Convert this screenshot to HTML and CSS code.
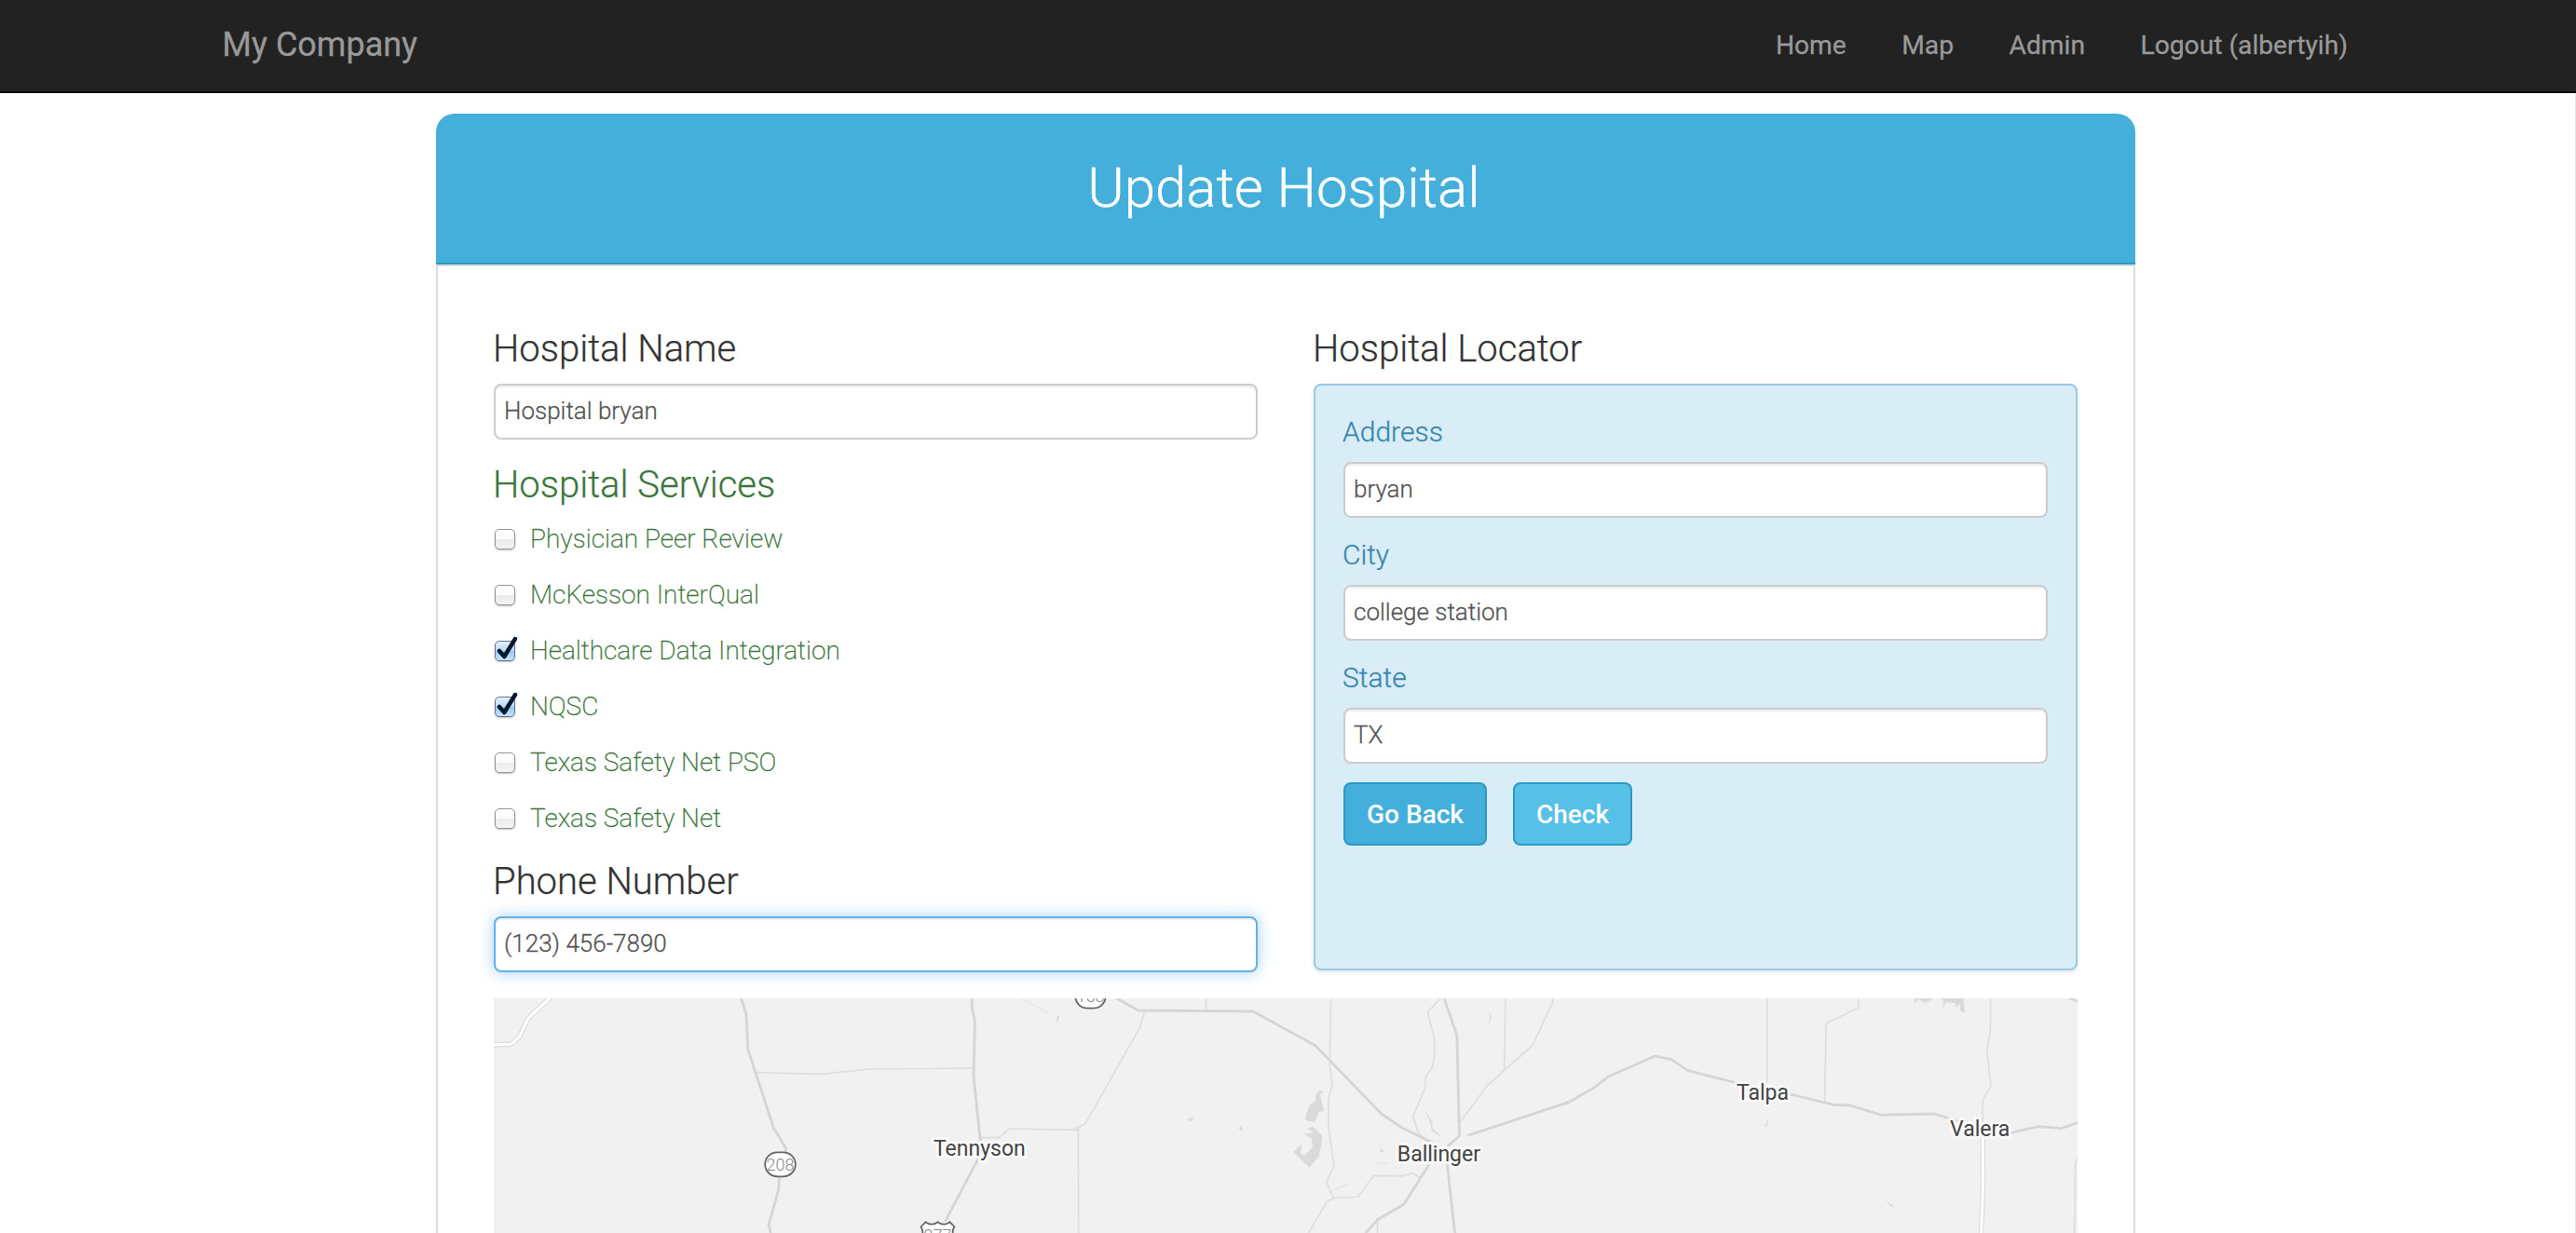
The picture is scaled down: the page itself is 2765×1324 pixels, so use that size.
FILE: index.html
```html
<!DOCTYPE html>
<html lang="en">
<head>
<meta charset="utf-8">
<title>Update Hospital</title>
<link rel="stylesheet" href="styles.css">
</head>
<body>
<header class="navbar">
  <a class="brand">My Company</a>
  <nav class="nav">
    <a>Home</a>
    <a>Map</a>
    <a>Admin</a>
    <a>Logout (albertyih)</a>
  </nav>
</header>
<main class="card">
  <h1 class="card-title">Update Hospital</h1>
  <div class="card-body">
    <div class="columns">
      <section class="details">
        <h2 class="heading">Hospital Name</h2>
        <input class="field" type="text" value="Hospital bryan">
        <h2 class="heading heading-green">Hospital Services</h2>
        <ul class="services">
          <li><span class="box"></span>Physician Peer Review</li>
          <li><span class="box"></span>McKesson InterQual</li>
          <li><span class="box box-on"><svg class="tick" viewBox="0 0 26 28"><path d="M6 16 L11.300 22 L23 3"/></svg></span>Healthcare Data Integration</li>
          <li><span class="box box-on"><svg class="tick" viewBox="0 0 26 28"><path d="M6 16 L11.300 22 L23 3"/></svg></span>NQSC</li>
          <li><span class="box"></span>Texas Safety Net PSO</li>
          <li><span class="box"></span>Texas Safety Net</li>
        </ul>
        <h2 class="heading heading-phone">Phone Number</h2>
        <input class="field field-active" type="text" value="(123) 456-7890">
      </section>
      <section class="locator">
        <h2 class="heading">Hospital Locator</h2>
        <div class="panel">
          <label class="label">Address</label>
          <input class="field" type="text" value="bryan">
          <label class="label">City</label>
          <input class="field" type="text" value="college station">
          <label class="label">State</label>
          <input class="field" type="text" value="TX">
          <div class="buttons">
            <button class="btn btn-back">Go Back</button>
            <button class="btn btn-check">Check</button>
          </div>
        </div>
      </section>
    </div>
    <svg class="map" viewBox="530 1072 1700 252">
      <g class="lake">
        <path d="M1416.500 1170.700L1421.400 1172.700 1416.800 1175.300 1421.100 1192.700 1415.700 1194 1411.500 1205 1401.500 1203 1401.200 1197.700 1406.500 1185.300 1412.200 1182 1411.900 1175.700Z"/>
        <path d="M1402.700 1211.700L1409.200 1209.700 1419.100 1219.300 1418.400 1228.300 1415.700 1241.700 1405.400 1254 1388.100 1237 1397.300 1228.300 1396.200 1239.700 1401.500 1240 1409.200 1231 1407.300 1222 1398.900 1217.700 1410 1216.300Z"/>
        <path d="M2054.900 1072L2055.300 1078.700 2059 1073 2066.700 1077.300 2073.400 1073V1072Z"/>
        <path d="M2082.700 1072L2086.500 1074.700 2085.200 1082.700 2089 1076 2098.700 1077.300 2099.500 1082 2103.700 1077.300 2104.200 1085.300 2109.200 1088 2107.500 1072Z"/>
        <path d="M1273.700 1202.300L1281 1199 1279.800 1204.300ZM1329.200 1211.700L1331.900 1209 1335 1215ZM1135.600 1088.700L1137.100 1092.700 1133.300 1099ZM1599.400 1086.700L1600.500 1092.700 1598.200 1100.700ZM1480.700 1235.700L1482.700 1232.300 1486.100 1238ZM1898.800 1200.700L1893.700 1209.300 1896.700 1210ZM2023.800 1288.300L2029.700 1295.700H2033Z"/>
        <path d="M1528.600 1190.300L1537.800 1205.700 1537.400 1211.700 1546.200 1219.700 1544.600 1220 1536.500 1213.300 1535 1205Z"/>
      </g>
      <g class="trail">
        <path d="M1096 1072L1126.800 1089M1427.900 1279L1448.200 1271M1475 1249H1490.700"/>
      </g>
      <g class="minor">
        <path d="M811.600 1151.700L881.600 1153.300 933.300 1148 1044.600 1147"/>
        <path d="M1052.300 1221.700H1072.200L1082.900 1212 1157.400 1213.300 1157.800 1324"/>
        <path d="M1228.600 1086L1223.600 1103.300 1165 1206.700 1153.600 1212M1157.400 1213.300L1160 1210"/>
        <path d="M1294.400 1072V1085"/>
        <path d="M1428.700 1072L1427.200 1141.700 1430.200 1165.300 1426 1179V1211.700L1432.100 1252.300 1423.700 1269 1431 1286.700 1457.800 1285 1474.600 1262.300 1505.600 1262.700 1516 1259.700 1524 1264.700"/>
        <path d="M1431 1286.700L1424.100 1290.700 1404.600 1324"/>
        <path d="M1546.600 1072L1532.400 1086.700 1539.700 1116 1540 1133.300 1537.400 1146 1530.100 1156 1529.700 1168.300 1516.700 1199 1522.800 1217.700 1532.400 1225"/>
        <path d="M1478.400 1310V1324"/>
        <path d="M1666.700 1072L1666.300 1076.700 1645.300 1122 1595.500 1166.700 1567.200 1205"/>
        <path d="M1615.800 1072L1614.700 1148.700M1897 1072L1896.700 1163"/>
        <path d="M1995.100 1072V1082L1960.200 1098.700 1958.500 1182"/>
        <path d="M2136.600 1072V1103.300L2132.800 1130 2137 1166 2128.200 1181.700V1205"/>
        <path d="M2230 1242.700L2227.500 1249.300 2226.600 1324"/>
      </g>
      <g class="major">
        <path d="M795.500 1072L800.900 1088.700 802.800 1126.700 830.300 1211 843.300 1232.700V1240L836.500 1263 835.700 1277.300 825 1315.300 827.300 1324"/>
        <path d="M1043.100 1072L1043.500 1083.300 1046.500 1096.700 1045 1155 1052.300 1225 1049.600 1245 1014.400 1311.700"/>
        <path d="M1198.700 1072L1221.700 1085 1344.900 1086 1411.900 1122.700 1482.700 1196 1504.900 1211 1538 1227.300"/>
        <path d="M1550 1072L1563.800 1111.700 1566.500 1220 1553.400 1231"/>
        <path d="M1534.300 1250L1506.800 1293.300 1479.200 1309.300 1465.800 1324M1551.500 1241.700L1553.800 1253.300 1561.100 1320 1562 1324"/>
        <path d="M1575.300 1219.300L1683.600 1183.700 1708.900 1169.300 1727 1155.700 1776.300 1134 1794 1137.700 1811.200 1149.300 1860.500 1162 1877.300 1170M1921.500 1175L1968.600 1186.300 1985.900 1187 2019.600 1197.300 2076 1196 2102.500 1204M2158 1216.700L2187.500 1209.700 2212.300 1211.700 2230 1205.700M2219.900 1071L2232 1076"/>
      </g>
      <path class="case" d="M528 1122L548.300 1121.300 557.500 1113.300 567 1093.300 592 1070M2128.200 1221.700L2128.600 1273 2126.500 1326"/>
      <path class="core" d="M528 1122L548.300 1121.300 557.500 1113.300 567 1093.300 592 1070M2128.200 1221.700L2128.600 1273 2126.500 1326"/>
      <g class="shield">
        <rect x="821.200" y="1237.300" width="32.600" height="26" rx="13"/>
        <text x="837.500" y="1256.700">208</text>
        <rect x="1154.200" y="1056.700" width="32.600" height="26" rx="13"/>
        <text x="1170.500" y="1076">158</text>
        <path d="M993.500 1312.200Q1000 1317 1006.500 1312.200Q1013 1317 1019.500 1312.200L1024.500 1317.500Q1021 1322 1024 1328V1340H989V1328Q992 1322 988.500 1317.500Z"/>
        <text x="1006.500" y="1333.300">277</text>
      </g>
      <g class="town">
        <text x="1002" y="1241">Tennyson</text>
        <text x="1499.800" y="1246.700">Ballinger</text>
        <text x="1864" y="1180.700">Talpa</text>
        <text x="2093" y="1219.800">Valera</text>
      </g>
    </svg>
  </div>
</main>
</body>
</html>
```
FILE: styles.css
```css
* { box-sizing: border-box; }

body {
  margin: 0;
  height: 100vh;
  overflow: hidden;
  background: linear-gradient(#e4e4e4, #e4e4e4) right / 1px 100% no-repeat #fff;
  font-family: Roboto, "Liberation Sans", sans-serif;
  font-weight: 300;
  color: #333;
  display: flex;
  flex-direction: column;
}

.navbar {
  display: flex;
  flex: none;
  justify-content: space-between;
  height: 100px;
  padding: 28px 245px 30px 238.500px;
  background: #222;
  border-bottom: 2px solid #080808;
  color: #999;
  font-weight: 400;
  line-height: 40px;
  -webkit-text-stroke: .3px;
}
.brand { font-size: 36px; }
.nav { display: flex; gap: 59.500px; font-size: 28.200px; line-height: 41px; }

.card {
  display: flex;
  flex: 1;
  flex-direction: column;
  min-height: 0;
  width: 1824px;
  margin: 22px 0 0 468px;
  border-radius: 20px 20px 0 0;
  overflow: hidden;
}
.card-title {
  flex: none;
  margin: 0;
  height: 162px;
  border-bottom: 2px solid #2a99c5;
  background: #43afda;
  color: #fff;
  font-size: 60px;
  font-weight: 300;
  line-height: 160px;
  text-align: center;
  text-indent: -4px;
  -webkit-text-stroke: .4px;
}
.card-body {
  flex: 1;
  min-height: 0;
  padding: 68px 60px 0;
  border: 2px solid #ddd;
  border-bottom: 0;
}
.columns { display: grid; grid-template-columns: 820px 820px; gap: 60px; }

.heading {
  margin: 0 0 16px;
  font-size: 40px;
  font-weight: 300;
  line-height: 42px;
  text-indent: -1px;
  -webkit-text-stroke: .25px;
}
.heading-green { margin: 28px 0 6px; color: #3c763d; }
.heading-phone { margin-top: 18px; }

.field {
  display: block;
  width: 100%;
  height: 60px;
  margin: 0;
  padding: 0 9px 2px;
  border: 2px solid #ccc;
  border-radius: 8px;
  outline: 0;
  background: #fff;
  box-shadow: inset 0 2px 2px rgba(0, 0, 0, .075);
  color: #555;
  font: 300 26px Roboto, "Liberation Sans", sans-serif;
  -webkit-text-stroke: .3px;
}
.field-active {
  border-color: #66afe9;
  box-shadow: inset 0 2px 2px rgba(0, 0, 0, .075), 0 0 16px rgba(102, 175, 233, .6);
}

.services {
  margin: 0;
  padding: 0;
  list-style: none;
  color: #3c763d;
  font-size: 28px;
  font-weight: 200;
  -webkit-text-stroke: .3px;
}
.services li { display: flex; align-items: center; gap: 16px; height: 60px; }
.box {
  position: relative;
  width: 22px;
  height: 22px;
  margin: 2px 0 0 1px;
  border: 1.500px solid #939393;
  border-radius: 5px;
  background: linear-gradient(#fff 0, #fbfbfb 48%, #ebebeb 52%, #f4f4f4);
  box-shadow: 0 1px 2px rgba(0, 0, 0, .25);
}
.box-on {
  border-color: #6b6f92;
  background: linear-gradient(#e3f0fc 0, #bcdcf8 48%, #94c8f4 52%, #c4e6fd);
}
.tick { position: absolute; left: -2px; top: -6px; width: 26px; height: 28px; overflow: visible; }
.tick path { fill: none; stroke: #06182f; stroke-width: 4.500; stroke-linecap: round; stroke-linejoin: round; }

.panel {
  height: 630px;
  padding: 30px;
  border: 2px solid #95cbe8;
  border-radius: 8px;
  background: #d9edf7;
  box-shadow: 0 2px 4px rgba(0, 0, 0, .1);
}
.label {
  display: block;
  margin: 20px 0 12px;
  color: #3a87ad;
  font-size: 30px;
  line-height: 40px;
  text-indent: -1px;
  -webkit-text-stroke: .3px;
}
.label:first-child { margin-top: 0; }
.buttons { display: flex; gap: 28px; margin-top: 20px; }
.btn {
  height: 68px;
  padding: 0;
  border: 2px solid #2a99c5;
  border-radius: 8px;
  color: #fff;
  font: 500 28px Roboto, "Liberation Sans", sans-serif;
}
.btn-back { width: 154px; background: #43afda; }
.btn-check { width: 128px; background: #56c0e7; }

.map { display: block; width: 1700px; height: 252px; margin-top: 28px; background: #f1f1f1; }
.lake { fill: #dadad9; }
.trail, .minor, .major, .case, .core { fill: none; stroke-linejoin: round; }
.trail { stroke: #e3e3e3; stroke-width: 1; }
.minor { stroke: #dedede; stroke-width: 1.700; }
.major { stroke: #d5d5d5; stroke-width: 2.800; }
.case { stroke: #dcdcdc; stroke-width: 5.500; }
.core { stroke: #fff; stroke-width: 3; }
.shield rect, .shield path { fill: #fff; stroke: #666; stroke-width: 1.800; }
.shield text { fill: #888; font-size: 18px; text-anchor: middle; }
.town text {
  fill: #444;
  stroke: #f9f9f9;
  stroke-width: 6;
  stroke-linejoin: round;
  paint-order: stroke;
  font-size: 23px;
  font-weight: 400;
}
```
